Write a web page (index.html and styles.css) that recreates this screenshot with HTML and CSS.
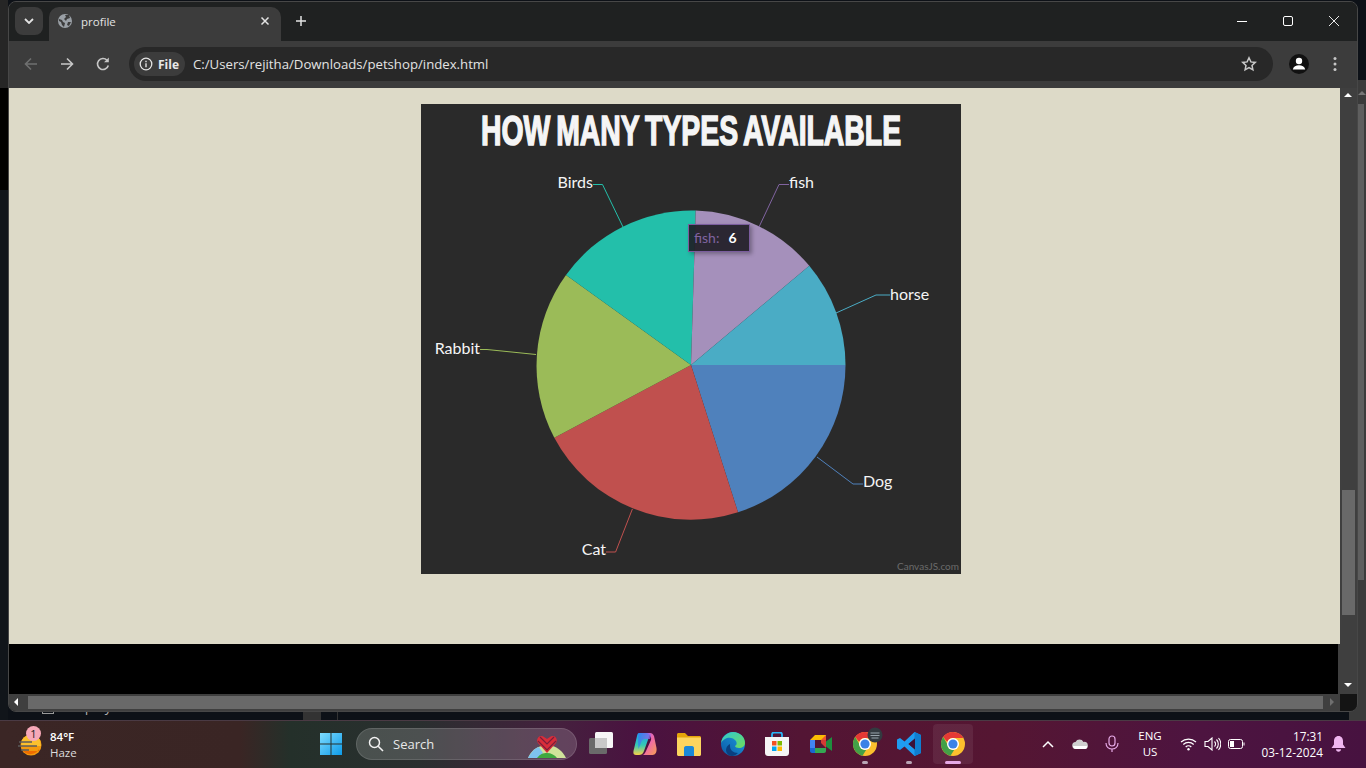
FILE: index.html
```html
<!DOCTYPE html>
<html lang="en">
<head>
    <meta charset="UTF-8">
    <meta name="viewport" content="width=device-width, initial-scale=1.0">
    <title>profile</title>
    <link rel="stylesheet" href="styles.css">
</head>
<body>
    <div class="desktop">
        <!-- bits of the editor window behind chrome -->
        <div class="under">
            <span class="under-box"></span>
            <span class="under-file">enquiry.css</span>
            <span class="under-block"></span>
            <span class="under-line"></span>
            <span class="under-corner"></span>
        </div>

        <div class="window">
            <div class="tabstrip">
                <button class="tab-search">
                    <svg width="10" height="6" viewBox="0 0 10 6"><path d="M1 1l4 4 4-4" fill="none" stroke="#e3e3e3" stroke-width="1.8"/></svg>
                </button>
                <div class="tab">
                    <svg class="favicon" width="14" height="14" viewBox="0 0 14 14"><circle cx="7" cy="7" r="7" fill="#9aa0a6"/><path d="M1 5l3 1 1 2 2 1-1 4-2-2-1-3-2-1zM7 1l4 0 1 3-3 1-1 2-2-2 2-2zM10 8l3 0-2 4-2-1z" fill="#3c3c3c"/></svg>
                    <span class="tab-title">profile</span>
                    <svg class="tab-close" width="10" height="10" viewBox="0 0 10 10"><path d="M1.5 1.5l7 7M8.5 1.5l-7 7" stroke="#e3e3e3" stroke-width="1.5"/></svg>
                </div>
                <button class="new-tab">
                    <svg width="12" height="12" viewBox="0 0 12 12"><path d="M6 1v10M1 6h10" stroke="#e3e3e3" stroke-width="1.5"/></svg>
                </button>
                <div class="win-controls">
                    <span class="win-btn"><svg width="10" height="10" viewBox="0 0 10 10"><path d="M0 5.5h10" stroke="#fff"/></svg></span>
                    <span class="win-btn"><svg width="10" height="10" viewBox="0 0 10 10"><rect x=".5" y=".5" width="9" height="9" rx="1.5" fill="none" stroke="#fff"/></svg></span>
                    <span class="win-btn"><svg width="10" height="10" viewBox="0 0 10 10"><path d="M0 0l10 10M10 0l-10 10" stroke="#fff" stroke-width=".9"/></svg></span>
                </div>
            </div>

            <div class="toolbar">
                <span class="tool-btn"><svg width="16" height="16" viewBox="0 0 16 16"><path d="M14 8H2.5M8 2.5L2.5 8 8 13.500" fill="none" stroke="#6f7070" stroke-width="1.6"/></svg></span>
                <span class="tool-btn"><svg width="16" height="16" viewBox="0 0 16 16"><path d="M2 8h11.500M8 2.500L13.500 8 8 13.500" fill="none" stroke="#c7c7c7" stroke-width="1.6"/></svg></span>
                <span class="tool-btn"><svg width="16" height="16" viewBox="0 0 16 16"><path d="M13.300 9.500A5.500 5.500 0 1 1 12 4.200" fill="none" stroke="#c7c7c7" stroke-width="1.600"/><path d="M13.800 1.500v4.800H9z" fill="#c7c7c7"/></svg></span>
                <div class="omnibox">
                    <span class="chip">
                        <svg width="14" height="14" viewBox="0 0 14 14"><circle cx="7" cy="7" r="5.800" fill="none" stroke="#e3e3e3" stroke-width="1.300"/><path d="M7 6.200v4M7 3.800v1.400" stroke="#e3e3e3" stroke-width="1.400"/></svg>
                        <b>File</b>
                    </span>
                    <span class="url">C:/Users/rejitha/Downloads/petshop/index.html</span>
                    <svg class="star" width="16" height="16" viewBox="0 0 16 16"><path d="M8 1.800l1.900 4.100 4.400.5-3.300 3 .9 4.400L8 11.600l-3.900 2.200.9-4.400-3.300-3 4.400-.5z" fill="none" stroke="#c7c7c7" stroke-width="1.500"/></svg>
                </div>
                <div class="tool-right">
                    <span class="tool-btn"><svg width="20" height="20" viewBox="0 0 20 20"><circle cx="10" cy="10" r="10" fill="#111"/><circle cx="10" cy="7" r="3.200" fill="#fff"/><path d="M3.800 15.500c.6-3 3.200-4.300 6.200-4.300s5.600 1.300 6.200 4.300z" fill="#fff"/></svg></span>
                    <span class="tool-btn"><svg width="4" height="16" viewBox="0 0 4 16"><circle cx="2" cy="2.500" r="1.500" fill="#c7c7c7"/><circle cx="2" cy="8" r="1.500" fill="#c7c7c7"/><circle cx="2" cy="13.500" r="1.500" fill="#c7c7c7"/></svg></span>
                </div>
            </div>

            <div class="viewport">
                <div class="page">
                    <div class="page-main">
                        <div class="chart">
                            <svg class="chart-svg" width="540" height="470" viewBox="0 0 540 470">
                                <text class="chart-title" transform="translate(270 41) scale(0.66 1)">HOW MANY TYPES AVAILABLE</text>

                                <path d="M270 261L424.500 261A154.500 154.500 0 0 1 317 408.300Z" fill="#4f81bc"/>
                                <path d="M270 261L317 408.300A154.500 154.500 0 0 1 133.300 333.700Z" fill="#c0504e"/>
                                <path d="M270 261L133.300 333.700A154.500 154.500 0 0 1 145 171Z" fill="#9bbb58"/>
                                <path d="M270 261L145 171A154.500 154.500 0 0 1 274.700 106.600Z" fill="#23bfaa"/>
                                <path d="M270 261L274.700 106.600A154.500 154.500 0 0 1 388.300 161.800Z" fill="#a590bb"/>
                                <path d="M270 261L388.300 161.800A154.500 154.500 0 0 1 424.500 261Z" fill="#4aacc5"/>

                                <path class="leader" d="M172 80.500H181.500L202 123" stroke="#23bfaa"/>
                                <path class="leader" d="M368 80.500H358L338 123" stroke="#8064a1"/>
                                <path class="leader" d="M469 191H455L415 209" stroke="#4aacc5"/>
                                <path class="leader" d="M442 380H432L396 353" stroke="#4f81bc"/>
                                <path class="leader" d="M185 448H194.600L211.400 405" stroke="#c0504e"/>
                                <path class="leader" d="M59 245.500H66L115 250.500" stroke="#9bbb58"/>

                                <text class="slice-label end" x="172" y="84">Birds</text>
                                <text class="slice-label" x="368" y="84">fish</text>
                                <text class="slice-label" x="469" y="196">horse</text>
                                <text class="slice-label" x="442" y="383">Dog</text>
                                <text class="slice-label end" x="185" y="451">Cat</text>
                                <text class="slice-label end" x="59" y="250">Rabbit</text>
                                <text class="credit" x="538" y="466">CanvasJS.com</text>
                            </svg>
                            <div class="tooltip"><span class="tip-name">fish:</span><b>6</b></div>
                        </div>
                    </div>
                    <div class="page-footer"></div>
                </div>
                <div class="vscroll">
                    <span class="arrow-up"></span>
                    <span class="vthumb"></span>
                    <span class="arrow-down"></span>
                </div>
            </div>

            <div class="hscroll">
                <span class="arrow-left"></span>
                <span class="hthumb"></span>
                <span class="arrow-right"></span>
                <span class="corner"></span>
            </div>
        </div>

        <div class="back-scroll">
            <span class="back-arrow"></span>
            <span class="back-thumb"></span>
        </div>
    </div>

    <div class="taskbar">
        <div class="weather">
            <svg class="weather-icon" width="26" height="24" viewBox="0 0 26 24">
                <circle cx="13" cy="12" r="10.500" fill="#f39a0e"/>
                <path d="M4 7a10.500 10.500 0 0 1 18 0l1 6H3z" fill="#fbc02d"/>
                <path d="M21 16a10 10 0 0 1-16 2h16z" fill="#ef6c00"/>
                <path d="M1 9h13M0 13h19M3 17h8" stroke="#5c5c5c" stroke-width="1.600"/>
            </svg>
            <span class="badge">1</span>
            <div class="weather-text">
                <b>84°F</b>
                <span>Haze</span>
            </div>
        </div>

        <span class="start">
            <svg width="24" height="24" viewBox="0 0 24 24">
                <defs><linearGradient id="winBlue" x1="0" y1="0" x2="1" y2="1"><stop offset="0" stop-color="#7fdcff"/><stop offset="1" stop-color="#0d9be8"/></linearGradient></defs>
                <path d="M1 1h10.500v10.500H1zM12.500 1H23v10.500H12.500zM1 12.500h10.500V23H1zM12.500 12.500H23V23H12.500z" fill="url(#winBlue)"/>
            </svg>
        </span>

        <div class="search">
            <svg width="16" height="16" viewBox="0 0 16 16"><circle cx="6.500" cy="6.500" r="5" fill="none" stroke="#f2f2f2" stroke-width="1.500"/><path d="M10.200 10.200l4.800 4.800" stroke="#f2f2f2" stroke-width="1.600"/></svg>
            <span>Search</span>
            <svg class="search-art" width="38" height="22" viewBox="0 0 38 22">
                <path d="M0 22C3 15 8 11 14 10h10c6 1 11 6 14 12z" fill="#cfe39a"/>
                <path d="M0 22C3 16 7 12 11 11l4 6-5 5z" fill="#7ec3ee"/>
                <path d="M9 22c3-4 6-5 10-5 4 0 8 2 10 5z" fill="#3fa83f"/>
                <path d="M19 17L10 7C8 4 10 0 13 0c3 0 4 2 6 3 2-1 3-3 6-3 3 0 5 4 3 7z" fill="#d92d3a"/>
                <path d="M12 1l7 7 7-7M10 5l9 9 9-9" fill="none" stroke="#7a1f3a" stroke-width="1.200"/>
            </svg>
        </div>

        <div class="apps">
            <span class="app">
                <svg width="24" height="24" viewBox="0 0 24 24"><rect x="0" y="6" width="18" height="16" rx="1.500" fill="#6a6a6a"/><rect x="6" y="0" width="18" height="16" rx="1.500" fill="#f7f7f7"/><rect x="6" y="6" width="12" height="10" fill="#c9c9c9"/></svg>
            </span>
            <span class="app">
                <svg width="24" height="24" viewBox="0 0 24 24">
                    <defs>
                        <linearGradient id="copA" x1="0" y1="0" x2="0" y2="1"><stop offset="0" stop-color="#1f9bf0"/><stop offset=".55" stop-color="#35c9b4"/><stop offset="1" stop-color="#f7d048"/></linearGradient>
                        <linearGradient id="copB" x1="0" y1="0" x2="1" y2="1"><stop offset="0" stop-color="#b566e0"/><stop offset=".5" stop-color="#f06aa8"/><stop offset="1" stop-color="#f5a04f"/></linearGradient>
                        <linearGradient id="copC" x1="0" y1="0" x2="1" y2="0"><stop offset="0" stop-color="#2f7ff0"/><stop offset="1" stop-color="#a45fe6"/></linearGradient>
                    </defs>
                    <path d="M6 1h9c2 0 2 2 1 4l-5 14c-1 3-3 4-5 4H3c-3 0-3-3-2-6L4 4c.4-2 1-3 2-3z" fill="url(#copA)"/>
                    <path d="M14 1h3c2 0 3 1 4 3l2.500 12c.5 4-1 7-4 7H9c2 0 3-2 4-4l5-11c.8-3-1-5-4-7z" fill="url(#copB)"/>
                    <path d="M6 1h9c2 0 3 1 3 3l-1 3h-5c-2 0-3 1-4 4l-2.500 6C5 9 5 4 6 1z" fill="url(#copC)" opacity=".75"/>
                </svg>
            </span>
            <span class="app">
                <svg width="24" height="24" viewBox="0 0 24 24"><path d="M0 2.500C0 1.500.7 1 1.500 1H8l3 3h11.500c.8 0 1.500.7 1.500 1.500V8H0z" fill="#e5a50a"/><path d="M0 5.500h24v17c0 .8-.7 1.500-1.500 1.500h-21C.7 24 0 23.300 0 22.500z" fill="#fcd55f"/><path d="M7 16c0-1 .7-2 2-2h6c1.300 0 2 1 2 2v8H7z" fill="#1a88d8"/></svg>
            </span>
            <span class="app">
                <svg width="24" height="24" viewBox="0 0 24 24">
                    <defs>
                        <linearGradient id="edgeA" x1="0" y1="1" x2="1" y2="0"><stop offset="0" stop-color="#0c59a4"/><stop offset="1" stop-color="#1b9de2"/></linearGradient>
                        <linearGradient id="edgeB" x1="0" y1="0" x2="1" y2="1"><stop offset="0" stop-color="#2ec9d6"/><stop offset="1" stop-color="#6fdc5a"/></linearGradient>
                    </defs>
                    <circle cx="12" cy="12" r="12" fill="url(#edgeA)"/>
                    <path d="M0 11C1 4 7 0 12 0c7 0 12 5 12 11 0 3-3 5-6 5-2 0-4-1-4-2 2-1 2-3 1-5-2-3-6-4-9-3-3 1-5 3-6 5z" fill="url(#edgeB)"/>
                    <path d="M9 14c0 4 3 7 8 7-2 2-4 3-6 3-3 0-6-3-6-6 0-3 2-5 4-6z" fill="#0a3f7f"/>
                </svg>
            </span>
            <span class="app">
                <svg width="24" height="24" viewBox="0 0 24 24"><path d="M7 6V2.500C7 1 8 .5 9 .5h6c1 0 2 .5 2 2V6" fill="none" stroke="#29b6f6" stroke-width="1.800"/><path d="M0 5h24v16c0 1.700-1.300 3-3 3H3c-1.700 0-3-1.300-3-3z" fill="#f5f5f5"/><rect x="7" y="9" width="4.500" height="4.500" fill="#f25022"/><rect x="12.500" y="9" width="4.500" height="4.500" fill="#7fba00"/><rect x="7" y="14.500" width="4.500" height="4.500" fill="#00a4ef"/><rect x="12.500" y="14.500" width="4.500" height="4.500" fill="#ffb900"/></svg>
            </span>
            <span class="app">
                <svg width="22" height="18" viewBox="0 0 22 18"><path d="M5 0h11v5H5v8H0V5z" fill="#fbbc04"/><path d="M0 5h5v8H0z" fill="#4285f4"/><path d="M0 13h5v5H2c-1 0-2-1-2-2z" fill="#1967d2"/><path d="M5 13h11v3c0 1-1 2-2 2H5z" fill="#34a853"/><path d="M16 0v13l-5-5V5z" fill="#ea4335" opacity=".85"/><path d="M16 6.500L22 2v14l-6-4.500z" fill="#1e8e3e"/></svg>
            </span>
            <span class="app app-open">
                <svg width="24" height="24" viewBox="0 0 24 24"><use href="#chromeLogo"/></svg>
                <svg class="app-thumb" width="16" height="16" viewBox="0 0 16 16"><circle cx="8" cy="8" r="7.500" fill="#333a40"/><path d="M3.500 6h9M3.500 8.500h9M4.500 11h7" stroke="#9aa5ad" stroke-width="1.200"/></svg>
            </span>
            <span class="app app-open">
                <svg width="24" height="24" viewBox="0 0 24 24"><path d="M17.500 0L24 3v18l-6.500 3-10-9.500L3 18l-3-1.500v-9L3 6l4.500 3.500zM18 6.500L11.500 12l6.500 5.500z" fill="#1f9cf0"/><path d="M17.500 0L24 3v18l-6.500 3z" fill="#0f7ed0"/><path d="M18 6.500L11.500 12l6.500 5.500z" fill="#3c1238"/></svg>
            </span>
            <span class="app app-active">
                <svg width="24" height="24" viewBox="0 0 24 24">
                    <g id="chromeLogo">
                        <circle cx="12" cy="12" r="12" fill="#fbc02d"/>
                        <path d="M12 0a12 12 0 0 1 10.400 6H12a6 6 0 0 0-5.700 4L2.200 5A12 12 0 0 1 12 0z" fill="#e53935"/>
                        <path d="M2.200 5l4.900 8.500a6 6 0 0 0 6 4.400L9.500 23.700A12 12 0 0 1 2.200 5z" fill="#43a047"/>
                        <circle cx="12" cy="12" r="6" fill="#fff"/>
                        <circle cx="12" cy="12" r="4.600" fill="#3b82e6"/>
                    </g>
                </svg>
            </span>
        </div>

        <div class="tray">
            <svg class="tray-chevron" width="12" height="8" viewBox="0 0 12 8"><path d="M1 7l5-5 5 5" fill="none" stroke="#fff" stroke-width="1.500"/></svg>
            <svg class="tray-cloud" width="16" height="10" viewBox="0 0 16 10"><path d="M4 10a3.500 3.500 0 0 1-.5-7A4.500 4.500 0 0 1 11.500 3 3.500 3.500 0 0 1 13 10z" fill="#cfcfcf"/><path d="M1 7h14c.5 1.500-.5 3-2 3H4C2 10 1 8.500 1 7z" fill="#fff"/></svg>
            <svg class="tray-mic" width="14" height="18" viewBox="0 0 14 18"><rect x="4" y="1" width="6" height="10" rx="3" fill="none" stroke="#e6a9e6" stroke-width="1.200"/><path d="M1 8c0 4 3 6 6 6s6-2 6-6M7 14v3" fill="none" stroke="#e6a9e6" stroke-width="1.200"/></svg>
            <div class="lang"><span>ENG</span><span>US</span></div>
            <svg class="tray-wifi" width="17" height="14" viewBox="0 0 17 14"><path d="M1 5a11 11 0 0 1 15 0M3.300 7.500a7.500 7.500 0 0 1 10.400 0M5.700 10a4 4 0 0 1 5.600 0" fill="none" stroke="#fff" stroke-width="1.200"/><circle cx="8.500" cy="12.300" r="1.200" fill="#fff"/></svg>
            <svg class="tray-sound" width="17" height="14" viewBox="0 0 17 14"><path d="M1 4.500h3L8 1v12L4 9.500H1z" fill="none" stroke="#fff" stroke-width="1.100"/><path d="M10.500 4.500a3.500 3.500 0 0 1 0 5M12.500 2.500a6.500 6.500 0 0 1 0 9M14.500 1a9 9 0 0 1 0 12" fill="none" stroke="#fff" stroke-width="1.100"/></svg>
            <svg class="tray-battery" width="17" height="10" viewBox="0 0 17 10"><rect x=".5" y=".5" width="14" height="9" rx="2" fill="none" stroke="#fff"/><rect x="2" y="2" width="4" height="6" fill="#fff"/><path d="M15.500 3.500h1v3h-1z" fill="#fff"/></svg>
            <div class="clock"><span>17:31</span><span>03-12-2024</span></div>
            <svg class="tray-bell" width="15" height="16" viewBox="0 0 15 16"><path d="M7.500 0C4.500 0 3 2.500 3 5v3.500L.5 12h14L12 8.500V5c0-2.500-1.500-5-4.500-5z" fill="#f0b6f0"/><path d="M5 13.300h5c0 1.500-1 2.500-2.500 2.500S5 14.800 5 13.300z" fill="#f0b6f0"/></svg>
        </div>
    </div>
</body>
</html>
```

FILE: styles.css
```css
* {
    box-sizing: border-box;
}
body {
    margin: 0;
    width: 1366px;
    height: 768px;
    overflow: hidden;
    background: #0d1117;
    font-family: "Open Sans", "Noto Sans", sans-serif;
}
svg {
    display: block;
    flex: none;
}
button {
    border: none;
    padding: 0;
    display: flex;
    align-items: center;
    justify-content: center;
}

/* desktop behind the browser */
.desktop {
    position: relative;
    height: 720px;
    display: flex;
    align-items: flex-start;
    padding-left: 8px;
    background: linear-gradient(#262626 0 88px, #000 88px 190px, #11151a 190px) left top / 8px 720px no-repeat, #0d1117;
}
.under {
    position: absolute;
    left: 0;
    right: 0;
    bottom: 0;
    height: 20px;
}
.under-box {
    position: absolute;
    left: 42px;
    top: 4px;
    width: 12px;
    height: 10px;
    border: 1px solid #999;
}
.under-file {
    position: absolute;
    left: 65px;
    top: -2px;
    font-size: 13px;
    color: #b5b5b5;
}
.under-block {
    position: absolute;
    left: 303px;
    top: 0;
    width: 18px;
    height: 20px;
    background: #333;
}
.under-line {
    position: absolute;
    left: 337px;
    top: 0;
    width: 1px;
    height: 20px;
    background: #333;
}
.under-corner {
    position: absolute;
    left: 1349px;
    top: 0;
    width: 17px;
    height: 20px;
    background: #3b3b3b;
}

/* browser window */
.window {
    position: relative;
    width: 1350px;
    height: 711px;
    margin-top: 1px;
    display: flex;
    flex-direction: column;
    border: 1px solid #474747;
    border-radius: 8px;
    overflow: hidden;
    background: #1f2121;
}
.tabstrip {
    height: 39px;
    display: flex;
    align-items: flex-start;
    padding: 5px 0 0 6px;
    background: #1f2121;
    flex: none;
}
.tab-search {
    width: 28px;
    height: 28px;
    border-radius: 8px;
    background: #3c3c3c;
}
.tab {
    width: 232px;
    height: 34px;
    margin-left: 6px;
    padding: 0 11px 6px 9px;
    display: flex;
    align-items: center;
    background: #3c3c3c;
    border-radius: 10px 10px 0 0;
}
.tab-title {
    flex: 1;
    margin-left: 9px;
    font-size: 11.5px;
    color: #e3e3e3;
}
.new-tab {
    width: 28px;
    height: 28px;
    margin-left: 6px;
    background: none;
}
.win-controls {
    margin-left: auto;
    display: flex;
}
.win-btn {
    width: 46px;
    height: 28px;
    display: flex;
    align-items: center;
    justify-content: center;
}
.toolbar {
    height: 47px;
    display: flex;
    align-items: center;
    padding: 0 0 1px 4px;
    background: #3c3c3c;
    flex: none;
}
.tool-btn {
    width: 36px;
    height: 34px;
    display: flex;
    align-items: center;
    justify-content: center;
}
.omnibox {
    flex: 1;
    height: 34px;
    margin-left: 8px;
    padding: 0 16px 0 5px;
    display: flex;
    align-items: center;
    border-radius: 17px;
    background: #282828;
}
.chip {
    width: 51px;
    height: 24px;
    padding-left: 5px;
    display: flex;
    align-items: center;
    gap: 5px;
    border-radius: 12px;
    background: #3c3c3c;
    font-size: 12px;
    color: #e9e9e9;
}
.url {
    flex: 1;
    margin-left: 8px;
    font-size: 13.2px;
    color: #e3e3e3;
}
.tool-right {
    display: flex;
    padding: 0 4px 0 8px;
}

/* page */
.viewport {
    height: 606px;
    display: flex;
    flex: none;
}
.page {
    width: 1331px;
    display: flex;
    flex-direction: column;
}
.page-main {
    height: 556px;
    padding: 16px 0 0 412px;
    background: #dddac8;
}
.page-footer {
    height: 50px;
    margin-right: 2px;
    background: #000;
    box-shadow: 2px 0 0 #3f3f3f;
}
.chart {
    position: relative;
    width: 540px;
    height: 470px;
    background: #2a2a2a;
}
.chart-title {
    font-family: "Liberation Sans", Arial, sans-serif;
    font-size: 43px;
    font-weight: 700;
    word-spacing: -3px;
    text-anchor: middle;
    fill: #f5f5f5;
    stroke: #f5f5f5;
    stroke-width: 1.5px;
}
.leader {
    fill: none;
    stroke-width: 1;
}
.slice-label {
    font-family: Lato, "Open Sans", sans-serif;
    font-size: 16px;
    fill: #f5f5f5;
}
.slice-label.end {
    text-anchor: end;
}
.credit {
    font-family: Lato, "Open Sans", sans-serif;
    font-size: 10px;
    fill: #6b6b6b;
    text-anchor: end;
}
.tooltip {
    position: absolute;
    left: 267px;
    top: 120px;
    width: 62px;
    height: 28px;
    padding: 0 0 2px 5px;
    display: flex;
    align-items: center;
    gap: 9px;
    border: 1px solid #7b5d9e;
    background: rgba(30, 28, 36, 0.9);
    box-shadow: 2px 2px 4px rgba(0, 0, 0, 0.3);
    font-family: Lato, "Open Sans", sans-serif;
    font-size: 14px;
    color: #fff;
}
.tip-name {
    color: #8064a1;
}

/* scrollbars */
.vscroll {
    position: relative;
    width: 17px;
    background: #3f3f3f;
}
.vthumb {
    position: absolute;
    left: 2px;
    top: 402px;
    width: 13px;
    height: 125px;
    background: #696969;
}
.arrow-up,
.arrow-down {
    position: absolute;
    left: 4px;
    width: 0;
    height: 0;
    border-left: 4px solid transparent;
    border-right: 4px solid transparent;
}
.arrow-up {
    top: 5px;
    border-bottom: 4px solid #fff;
}
.arrow-down {
    top: 595px;
    border-top: 4px solid #fff;
}
.hscroll {
    position: relative;
    flex: 1;
    background: #3f3f3f;
}
.hthumb {
    position: absolute;
    left: 19px;
    top: 2px;
    width: 1295px;
    height: 13px;
    background: #696969;
}
.arrow-left,
.arrow-right {
    position: absolute;
    top: 4px;
    width: 0;
    height: 0;
    border-top: 4px solid transparent;
    border-bottom: 4px solid transparent;
}
.arrow-left {
    left: 5px;
    border-right: 4px solid #fff;
}
.arrow-right {
    left: 1321px;
    border-left: 4px solid #6f6f6f;
}
.corner {
    position: absolute;
    right: 0;
    top: 0;
    width: 17px;
    height: 100%;
    background: #141414;
}
.back-scroll {
    position: relative;
    width: 8px;
    height: 631px;
    margin-top: 80px;
    background: #3b3b3b;
}
.back-arrow {
    position: absolute;
    left: 0;
    top: 11px;
    width: 0;
    height: 0;
    border-left: 4px solid transparent;
    border-right: 4px solid transparent;
    border-bottom: 4px solid #777;
}
.back-thumb {
    position: absolute;
    left: 0;
    top: 24px;
    width: 6px;
    height: 476px;
    background: #5e5e5e;
}

/* taskbar */
.taskbar {
    height: 48px;
    display: flex;
    align-items: center;
    padding-bottom: 1px;
    border-top: 1px solid #4a3a44;
    background: linear-gradient(90deg, #3b2625 0, #3a2524 240px, #24302a 290px, #2a2f2f 420px, #45203e 560px, #4a1240 640px, #531534 800px, #551632 1000px, #4d1440 1200px, #471240 100%);
    color: #fff;
}
.weather {
    position: relative;
    width: 309px;
    height: 100%;
    padding-left: 18px;
    display: flex;
    align-items: center;
    flex: none;
}
.weather-icon {
    margin-top: 2px;
}
.badge {
    position: absolute;
    left: 26px;
    top: 5px;
    width: 15px;
    height: 15px;
    border-radius: 50%;
    background: #f7a8b8;
    color: #222;
    font-size: 11px;
    line-height: 15px;
    text-align: center;
}
.weather-text {
    margin-left: 6px;
    display: flex;
    flex-direction: column;
    gap: 1px;
    font-size: 11.5px;
    line-height: 15px;
}
.weather-text b {
    font-weight: 600;
}
.weather-text span {
    color: #ddd;
}
.start {
    width: 44px;
    display: flex;
    justify-content: center;
    flex: none;
}
.search {
    width: 221px;
    height: 32px;
    margin-left: 3px;
    padding-left: 11px;
    display: flex;
    align-items: center;
    gap: 9px;
    border: 1px solid rgba(255, 255, 255, 0.12);
    border-radius: 16px;
    background: rgba(255, 255, 255, 0.16);
    font-size: 13px;
    color: #e8e8e8;
    flex: none;
}
.search-art {
    margin: 6px 10px 0 auto;
}
.apps {
    margin-left: 2px;
    display: flex;
    flex: none;
}
.app {
    position: relative;
    width: 44px;
    height: 40px;
    display: flex;
    align-items: center;
    justify-content: center;
}
.app-open::after {
    content: "";
    position: absolute;
    left: 19px;
    bottom: 0;
    width: 6px;
    height: 3px;
    border-radius: 2px;
    background: #b9a5b5;
}
.app-active::before {
    content: "";
    position: absolute;
    left: 2px;
    top: 0;
    width: 40px;
    height: 40px;
    border-radius: 4px;
    background: rgba(255, 255, 255, 0.07);
}
.app-active::after {
    content: "";
    position: absolute;
    left: 14px;
    bottom: 0;
    width: 16px;
    height: 3px;
    border-radius: 2px;
    background: #e6a9e6;
}
.app-active svg {
    position: relative;
}
.app-thumb {
    position: absolute;
    left: 24px;
    top: 3px;
}
.tray {
    position: relative;
    flex: 1;
    height: 100%;
    display: flex;
    align-items: center;
}
.tray-chevron {
    margin-left: 67px;
}
.tray-cloud {
    margin-left: 18px;
}
.tray-mic {
    margin-left: 17px;
}
.lang {
    width: 36px;
    margin-left: 13px;
    display: flex;
    flex-direction: column;
    align-items: center;
    line-height: 16px;
    font-size: 11.5px;
}
.tray-wifi {
    margin-left: 12px;
}
.tray-sound {
    margin-left: 7px;
}
.tray-battery {
    margin-left: 7px;
}
.clock {
    width: 70px;
    margin-left: 8px;
    display: flex;
    flex-direction: column;
    align-items: flex-end;
    line-height: 16px;
    font-size: 11.8px;
}
.tray-bell {
    margin-left: 8px;
}
```
